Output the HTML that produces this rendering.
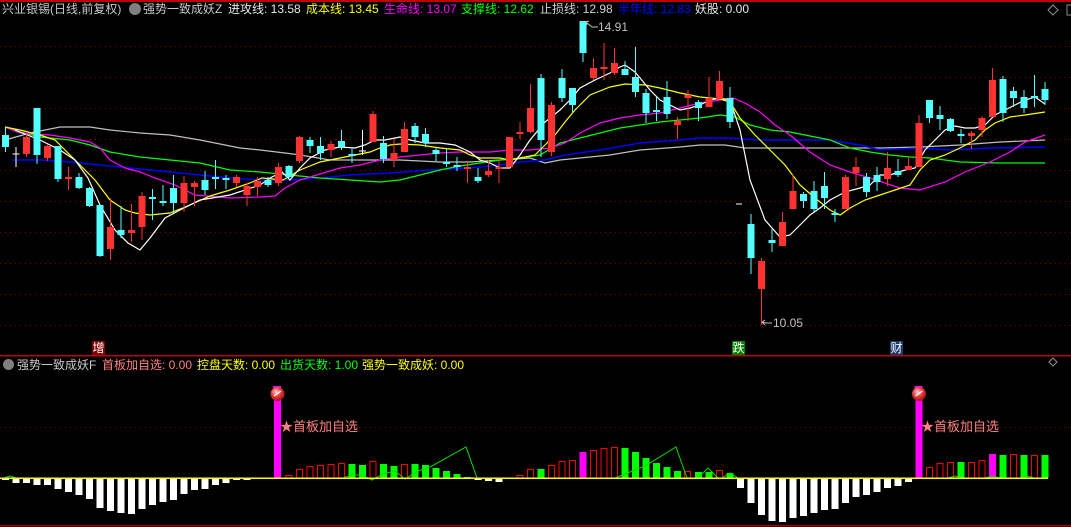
<!DOCTYPE html>
<html><head><meta charset="utf-8"><style>
html,body{margin:0;padding:0;background:#000;width:1071px;height:527px;overflow:hidden}
.t{position:absolute;font-family:"Liberation Sans","Noto Sans CJK SC",sans-serif;font-size:12px;line-height:14px;white-space:nowrap}
</style></head><body>
<svg width="1071" height="527" style="position:absolute;left:0;top:0" xmlns="http://www.w3.org/2000/svg">
<defs><radialGradient id="bg" cx="0.4" cy="0.35" r="0.7"><stop offset="0" stop-color="#ffd0d0"/><stop offset="0.5" stop-color="#e83838"/><stop offset="1" stop-color="#901010"/></radialGradient></defs>
<rect x="0" y="0" width="1071" height="2" fill="#c00000"/>
<g stroke="#8a0000" stroke-dasharray="1,4" stroke-width="1">
<line x1="0" y1="46.5" x2="1071" y2="46.5"/><line x1="0" y1="77.5" x2="1071" y2="77.5"/><line x1="0" y1="108.5" x2="1071" y2="108.5"/><line x1="0" y1="139.5" x2="1071" y2="139.5"/><line x1="0" y1="170.5" x2="1071" y2="170.5"/><line x1="0" y1="201.5" x2="1071" y2="201.5"/><line x1="0" y1="232.5" x2="1071" y2="232.5"/><line x1="0" y1="263.5" x2="1071" y2="263.5"/><line x1="0" y1="294.5" x2="1071" y2="294.5"/><line x1="0" y1="325.5" x2="1071" y2="325.5"/>
<line x1="0" y1="427.5" x2="1071" y2="427.5"/>
</g>
<g fill="none" stroke-width="1.2">
<polyline stroke="#c0c0c0" points="5,140 30,133 60,127 90,127 110,130 140,133 170,135 200,140 240,148 260,150 285,153 300,155 330,160 360,160 400,160 440,162 470,162 500,160 530,158 545,163 560,160 580,158 610,155 640,150 680,147 700,145 725,145 745,148 800,148 840,148 880,148 920,147 960,145 1000,142 1045,140"/>
<polyline stroke="#0000ff" stroke-width="1.5" points="12,160 40,160 60,161 80,163 100,165 140,169 170,172 200,175 230,178 260,180 290,180 320,178 350,175 390,173 430,170 470,168 500,165 520,162 545,160 565,155 600,150 640,143 680,140 700,138 730,138 760,140 800,140 830,140 860,145 880,150 920,148 950,150 990,148 1045,147"/>
<polyline stroke="#00ff00" points="5,127 20,132 40,137 70,140 90,145 110,152 140,157 170,160 200,163 230,170 260,172 290,175 320,178 350,180 380,182 400,180 420,175 440,170 460,166 480,163 500,160 520,158 540,155 560,143 580,138 600,133 620,128 640,125 660,122 680,120 700,118 720,115 735,117 750,125 770,130 790,132 810,136 830,140 850,148 870,152 890,155 910,157 930,158 960,162 1000,163 1045,163"/>
<polyline stroke="#ff00ff" points="5,127 20,133 50,135 70,138 90,142 100,148 110,160 125,168 140,172 155,178 175,185 195,195 230,198 260,197 275,196 285,188 300,180 320,174 340,168 360,165 380,160 400,157 420,155 440,153 460,152 490,152 510,150 530,150 550,148 565,143 580,133 600,123 620,118 640,115 660,113 680,108 700,103 720,100 733,98 745,103 760,112 775,125 790,135 810,152 830,165 850,172 870,178 900,188 920,190 945,182 965,172 990,162 1010,152 1025,142 1045,135"/>
<polyline stroke="#ffff00" points="5,127 20,130 40,135 55,140 70,155 85,170 95,180 110,200 125,210 135,213 150,215 170,213 190,205 210,196 230,190 250,183 262,178 283,180 300,170 320,162 340,158 355,155 370,152 380,148 390,145 400,144 420,145 440,148 460,150 470,155 480,158 500,158 510,160 520,158 535,155 545,145 555,135 565,122 575,110 590,95 610,87 625,84 645,85 660,88 680,93 700,97 720,99 730,102 740,118 755,135 770,150 785,165 800,185 815,198 830,210 840,215 850,208 865,200 880,195 895,190 910,185 920,170 930,160 945,155 960,148 975,140 985,130 995,123 1010,117 1025,115 1045,112"/>
<polyline stroke="#ffffff" points="15,130 40,140 60,150 75,160 88,178 100,205 115,230 128,243 140,250 150,238 165,218 180,210 200,200 230,195 260,185 270,178 282,172 290,180 300,168 310,158 325,150 340,147 355,148 365,145 375,140 385,140 400,137 410,140 425,143 440,143 455,145 470,152 480,160 490,163 500,168 510,168 520,155 530,140 540,128 545,122 560,110 570,100 580,88 595,80 610,73 620,67 625,65 635,72 650,90 660,100 670,105 680,110 690,108 700,105 710,100 720,98 730,100 740,130 750,180 765,220 780,237 790,235 800,225 810,215 820,208 830,200 845,192 860,188 870,185 880,175 890,175 905,170 915,168 925,150 935,140 945,130 955,126 965,128 975,128 985,125 995,115 1005,110 1015,105 1025,100 1035,97 1045,104"/>
</g>
<path stroke="#54ffff" stroke-width="1" fill="none" d="M5.5 127V152M37 108V164M58 146V182M79 173V189M89.5 187V207M100 205V257M121 206V238M152.5 189V220M163 185V206M173.5 175V213M205 171V195M215.5 160V189M226 175V189M268 177V187M289 165V178M310 137V153M320.5 137V160M341.5 130V150M352 147V163M383.5 136V163M415 123V143M425.5 128V147M436 147V161M446.5 148V167M457 157V171M478 168V183M541 74V157M562 69V102M572.5 88V112M583 21V62M625 61V75M635.5 47V97M646 89V123M656.5 97V121M667 81V119M698.5 100V121M730 87V128M751 214V274M772 228V252M803.5 192V208M814 181V212M824.5 172V209M835 209V222M866.5 173V197M877 167V191M898 159V177M929.5 100V123M940 106V130M950.5 118V132M961 129V143M1003 76V122M1013.5 87V107M1024 90V113M1034.5 75V107M1045 82V105"/>
<path stroke="#ff3232" stroke-width="1" fill="none" d="M26.5 134V157M47.5 144V161M68.5 167V190M110.5 198V260M131.5 204V242M142 192V240M184 176V212M194.5 181V206M236.5 175V187M247 183V206M257.5 177V196M278.5 163V186M299.5 136V163M331 141V157M373 111V142M394 139V167M404.5 122V152M467.5 163V183M488.5 160V177M499 161V183M509.5 137V167M520 122V139M530.5 84V133M551.5 102V156M593.5 58V80M604 43V80M614.5 48V75M677.5 117V139M688 90V121M709 77V107M719.5 71V99M761.5 258V325M782.5 212V246M793 175V209M845.5 175V209M856 157V186M887.5 152V186M908.5 157V170M919 115V167M971.5 131V149M982 116V137M992.5 68V117"/>
<path stroke="#ffffff" stroke-width="1" fill="none" d="M16 147V167M362.5 130V155M12.5 154H19.5M359 151H366M736 204H742"/>
<g fill="#54ffff">
<rect x="2" y="135" width="7" height="12"/><rect x="33.5" y="108" width="7" height="47"/><rect x="54.5" y="146" width="7" height="33"/><rect x="75.5" y="177" width="7" height="11"/><rect x="86" y="188" width="7" height="18"/><rect x="96.5" y="205" width="7" height="51"/><rect x="117.5" y="230" width="7" height="5"/><rect x="149" y="197" width="7" height="2"/><rect x="159.5" y="201" width="7" height="2"/><rect x="170" y="188" width="7" height="15"/><rect x="201.5" y="180" width="7" height="10"/><rect x="212" y="177" width="7" height="2"/><rect x="222.5" y="178" width="7" height="2"/><rect x="264.5" y="180" width="7" height="5"/><rect x="285.5" y="166" width="7" height="11"/><rect x="306.5" y="140" width="7" height="6"/><rect x="317" y="146" width="7" height="7"/><rect x="338" y="141" width="7" height="6"/><rect x="348.5" y="154" width="7" height="2"/><rect x="380" y="143" width="7" height="16"/><rect x="411.5" y="126" width="7" height="11"/><rect x="422" y="134" width="7" height="9"/><rect x="432.5" y="150" width="7" height="4"/><rect x="443" y="162" width="7" height="2"/><rect x="453.5" y="165" width="7" height="2"/><rect x="474.5" y="177" width="7" height="4"/><rect x="537.5" y="78" width="7" height="62"/><rect x="558.5" y="78" width="7" height="20"/><rect x="569" y="88" width="7" height="17"/><rect x="579.5" y="21" width="7" height="32"/><rect x="621.5" y="69" width="7" height="6"/><rect x="632" y="77" width="7" height="15"/><rect x="642.5" y="93" width="7" height="20"/><rect x="653" y="110" width="7" height="2"/><rect x="663.5" y="97" width="7" height="17"/><rect x="695" y="102" width="7" height="6"/><rect x="726.5" y="98" width="7" height="24"/><rect x="747.5" y="224" width="7" height="34"/><rect x="768.5" y="240" width="7" height="3"/><rect x="800" y="194" width="7" height="7"/><rect x="810.5" y="191" width="7" height="18"/><rect x="821" y="186" width="7" height="12"/><rect x="831.5" y="213" width="7" height="2"/><rect x="863" y="177" width="7" height="15"/><rect x="873.5" y="175" width="7" height="7"/><rect x="894.5" y="171" width="7" height="4"/><rect x="926" y="100" width="7" height="18"/><rect x="936.5" y="115" width="7" height="4"/><rect x="947" y="119" width="7" height="12"/><rect x="957.5" y="134" width="7" height="2"/><rect x="999.5" y="79" width="7" height="34"/><rect x="1010" y="91" width="7" height="7"/><rect x="1020.5" y="97" width="7" height="11"/><rect x="1031" y="96" width="7" height="2"/><rect x="1041.5" y="89" width="7" height="11"/>
</g>
<g fill="#ff3232">
<rect x="23" y="137" width="7" height="17"/><rect x="44" y="146" width="7" height="12"/><rect x="65" y="177" width="7" height="2"/><rect x="107" y="227" width="7" height="22"/><rect x="128" y="230" width="7" height="3"/><rect x="138.5" y="196" width="7" height="31"/><rect x="180.5" y="183" width="7" height="20"/><rect x="191" y="183" width="7" height="4"/><rect x="233" y="177" width="7" height="6"/><rect x="243.5" y="186" width="7" height="9"/><rect x="254" y="181" width="7" height="6"/><rect x="275" y="167" width="7" height="16"/><rect x="296" y="137" width="7" height="24"/><rect x="327.5" y="144" width="7" height="6"/><rect x="369.5" y="114" width="7" height="28"/><rect x="390.5" y="153" width="7" height="7"/><rect x="401" y="129" width="7" height="23"/><rect x="464" y="167" width="7" height="2"/><rect x="485" y="171" width="7" height="4"/><rect x="495.5" y="167" width="7" height="2"/><rect x="506" y="137" width="7" height="30"/><rect x="516.5" y="132" width="7" height="2"/><rect x="527" y="108" width="7" height="24"/><rect x="548" y="105" width="7" height="47"/><rect x="590" y="68" width="7" height="10"/><rect x="600.5" y="67" width="7" height="2"/><rect x="611" y="63" width="7" height="10"/><rect x="674" y="121" width="7" height="4"/><rect x="684.5" y="95" width="7" height="3"/><rect x="705.5" y="98" width="7" height="9"/><rect x="716" y="81" width="7" height="18"/><rect x="758" y="261" width="7" height="28"/><rect x="779" y="222" width="7" height="24"/><rect x="789.5" y="191" width="7" height="18"/><rect x="842" y="177" width="7" height="32"/><rect x="852.5" y="167" width="7" height="6"/><rect x="884" y="168" width="7" height="11"/><rect x="905" y="166" width="7" height="4"/><rect x="915.5" y="123" width="7" height="44"/><rect x="968" y="133" width="7" height="3"/><rect x="978.5" y="118" width="7" height="12"/><rect x="989" y="80" width="7" height="37"/>
</g>
<g stroke="#c0c0c0" fill="none"><path d="M586 22L592 27H598M586 22L589 21M586 22L587 25"/><path d="M762 322L766 323H772M762 322L765 320M762 322L765 325"/></g>
<text x="598" y="31" fill="#c0c0c0" font-family="Liberation Sans" font-size="12">14.91</text>
<text x="773" y="327" fill="#c0c0c0" font-family="Liberation Sans" font-size="12">10.05</text>
<path d="M1053 5L1058 10L1053 15L1048 10Z" fill="none" stroke="#909090"/>
<rect x="1067" y="5" width="6" height="10" fill="none" stroke="#909090"/>
<path d="M1053 358L1057 362L1053 366L1049 362Z" fill="none" stroke="#909090"/>
<rect x="0" y="355" width="1071" height="1.5" fill="#c00000"/>
<rect x="0" y="525" width="1071" height="1.5" fill="#a00000"/>
<rect x="92" y="341" width="13" height="14" fill="#800000"/>
<rect x="732" y="341" width="13" height="14" fill="#008000"/>
<rect x="890" y="341" width="13" height="14" fill="#1a3a70"/>
<g fill="#ffffff">
<rect x="2" y="478" width="7" height="2"/><rect x="12.5" y="478" width="7" height="5"/><rect x="23" y="478" width="7" height="5"/><rect x="33.5" y="478" width="7" height="7"/><rect x="44" y="478" width="7" height="7"/><rect x="54.5" y="478" width="7" height="11"/><rect x="65" y="478" width="7" height="14"/><rect x="75.5" y="478" width="7" height="17"/><rect x="86" y="478" width="7" height="21"/><rect x="96.5" y="478" width="7" height="30"/><rect x="107" y="478" width="7" height="33"/><rect x="117.5" y="478" width="7" height="35"/><rect x="128" y="478" width="7" height="36"/><rect x="138.5" y="478" width="7" height="31"/><rect x="149" y="478" width="7" height="27"/><rect x="159.5" y="478" width="7" height="24"/><rect x="170" y="478" width="7" height="22"/><rect x="180.5" y="478" width="7" height="16"/><rect x="191" y="478" width="7" height="12"/><rect x="201.5" y="478" width="7" height="11"/><rect x="212" y="478" width="7" height="7"/><rect x="222.5" y="478" width="7" height="5"/><rect x="233" y="478" width="7" height="2"/><rect x="243.5" y="478" width="7" height="2"/>
<rect x="474.5" y="478" width="7" height="2"/><rect x="485" y="478" width="7" height="3"/><rect x="495.5" y="478" width="7" height="4"/>
<rect x="737" y="478" width="7" height="10"/><rect x="747.5" y="478" width="7" height="25"/><rect x="758" y="478" width="7" height="37"/><rect x="768.5" y="478" width="7" height="43"/><rect x="779" y="478" width="7" height="44"/><rect x="789.5" y="478" width="7" height="40"/><rect x="800" y="478" width="7" height="38"/><rect x="810.5" y="478" width="7" height="35"/><rect x="821" y="478" width="7" height="32"/><rect x="831.5" y="478" width="7" height="31"/><rect x="842" y="478" width="7" height="25"/><rect x="852.5" y="478" width="7" height="19"/><rect x="863" y="478" width="7" height="17"/><rect x="873.5" y="478" width="7" height="14"/><rect x="884" y="478" width="7" height="10"/><rect x="894.5" y="478" width="7" height="8"/><rect x="905" y="478" width="7" height="4"/>
</g>
<g fill="#00ff00">
<rect x="348.5" y="464" width="7" height="14"/><rect x="359" y="465" width="7" height="13"/><rect x="380" y="464" width="7" height="14"/><rect x="390.5" y="466" width="7" height="12"/><rect x="411.5" y="464" width="7" height="14"/><rect x="422" y="465" width="7" height="13"/><rect x="432.5" y="468" width="7" height="10"/><rect x="443" y="471" width="7" height="7"/><rect x="453.5" y="474" width="7" height="4"/><rect x="464" y="477" width="7" height="1"/>
<rect x="537.5" y="469" width="7" height="9"/><rect x="621.5" y="448" width="7" height="30"/><rect x="632" y="452" width="7" height="26"/><rect x="642.5" y="458" width="7" height="20"/><rect x="653" y="463" width="7" height="15"/><rect x="663.5" y="467" width="7" height="11"/><rect x="674" y="471" width="7" height="7"/><rect x="695" y="472" width="7" height="6"/><rect x="705.5" y="472" width="7" height="6"/><rect x="726.5" y="473" width="7" height="5"/>
<rect x="957.5" y="462" width="7" height="16"/><rect x="999.5" y="455" width="7" height="23"/><rect x="1020.5" y="455" width="7" height="23"/><rect x="1041.5" y="455" width="7" height="23"/>
</g>
<g fill="none" stroke="#ff0000" stroke-width="1">
<rect x="286" y="475.5" width="6" height="3"/><rect x="296.5" y="469.5" width="6" height="9"/><rect x="307" y="466.5" width="6" height="12"/><rect x="317.5" y="465.5" width="6" height="13"/><rect x="328" y="464.5" width="6" height="14"/><rect x="338.5" y="463.5" width="6" height="15"/><rect x="370" y="461.5" width="6" height="17"/><rect x="401.5" y="464.5" width="6" height="14"/>
<rect x="527.5" y="469.5" width="6" height="9"/><rect x="517" y="475.5" width="6" height="3"/><rect x="548.5" y="465.5" width="6" height="13"/><rect x="559" y="461.5" width="6" height="17"/><rect x="569.5" y="460.5" width="6" height="18"/><rect x="590.5" y="450.5" width="6" height="28"/><rect x="601" y="448.5" width="6" height="30"/><rect x="611.5" y="447.5" width="6" height="31"/><rect x="684.5" y="471.5" width="6" height="7"/><rect x="716.5" y="470.5" width="6" height="8"/>
<rect x="926.5" y="467.5" width="6" height="11"/><rect x="937" y="463.5" width="6" height="15"/><rect x="947.5" y="462.5" width="6" height="16"/><rect x="968.5" y="462.5" width="6" height="16"/><rect x="979" y="460.5" width="6" height="18"/><rect x="1010.5" y="454.5" width="6" height="24"/><rect x="1031.5" y="455.5" width="6" height="23"/>
</g>
<g fill="#ff00ff">
<rect x="579.5" y="452" width="7" height="26"/><rect x="989" y="454" width="7" height="24"/>
<rect x="274" y="400" width="7" height="78"/><rect x="273" y="386" width="8" height="2"/>
<rect x="915.5" y="400" width="7" height="78"/><rect x="914.5" y="386" width="8" height="2"/>
</g>
<circle cx="277.5" cy="394" r="7" fill="url(#bg)"/><path d="M274 396L281 391" stroke="#fff" stroke-width="1.2"/>
<circle cx="919" cy="394" r="7" fill="url(#bg)"/><path d="M915.5 396L922.5 391" stroke="#fff" stroke-width="1.2"/>
<g fill="none" stroke="#00dd00" stroke-width="1">
<polyline points="343,478 352,475 362,475 372,480 383,474 395,471 405,479 418,471 430,467 466,447 477,478"/>
<polyline points="615,478 630,472 645,466 676,447 687,478"/>
<polyline points="698,478 708,468 718,478"/>
<polyline points="722,478 730,473 738,478"/>
<polyline points="4,478 10,476 16,478"/>
<polyline points="948,478 955,476 962,478 985,478 992,476 1000,478 1020,478 1027,476 1034,478"/>
</g>
<rect x="0" y="477.5" width="1048" height="1.5" fill="#ffff00"/>
</svg>
<div class="t" style="left:2px;top:2px;color:#c8c8c8">兴业银锡(日线,前复权)</div>
<div class="t" style="left:129px;top:3px;width:12px;height:12px;border-radius:6px;background:#808080"></div>
<div class="t" style="left:143px;top:2px;color:#c8c8c8">强势一致成妖Z</div>
<div class="t" style="left:228px;top:2px;color:#e8e8e8">进攻线: 13.58</div>
<div class="t" style="left:306px;top:2px;color:#ffff00">成本线: 13.45</div>
<div class="t" style="left:384px;top:2px;color:#ff00ff">生命线: 13.07</div>
<div class="t" style="left:461px;top:2px;color:#00ff00">支撑线: 12.62</div>
<div class="t" style="left:540px;top:2px;color:#d0d0d0">止损线: 12.98</div>
<div class="t" style="left:618px;top:2px;color:#0000ff">半年线: 12.83</div>
<div class="t" style="left:695px;top:2px;color:#e8e8e8">妖股: 0.00</div>
<div class="t" style="left:92px;top:341px;width:13px;text-align:center;color:#fff">增</div>
<div class="t" style="left:732px;top:341px;width:13px;text-align:center;color:#fff">跌</div>
<div class="t" style="left:890px;top:341px;width:13px;text-align:center;color:#fff">财</div>
<div class="t" style="left:3px;top:359px;width:11px;height:11px;border-radius:6px;background:#808080"></div>
<div class="t" style="left:17px;top:358px;color:#c8c8c8">强势一致成妖F</div>
<div class="t" style="left:102px;top:358px;color:#ff8080">首板加自选: 0.00</div>
<div class="t" style="left:197px;top:358px;color:#ffff00">控盘天数: 0.00</div>
<div class="t" style="left:280px;top:358px;color:#00ff00">出货天数: 1.00</div>
<div class="t" style="left:362px;top:358px;color:#ffff00">强势一致成妖: 0.00</div>
<div class="t" style="left:280px;top:420px;color:#ff8080;font-size:13px">★首板加自选</div>
<div class="t" style="left:921px;top:420px;color:#ff8080;font-size:13px">★首板加自选</div>
</body></html>
